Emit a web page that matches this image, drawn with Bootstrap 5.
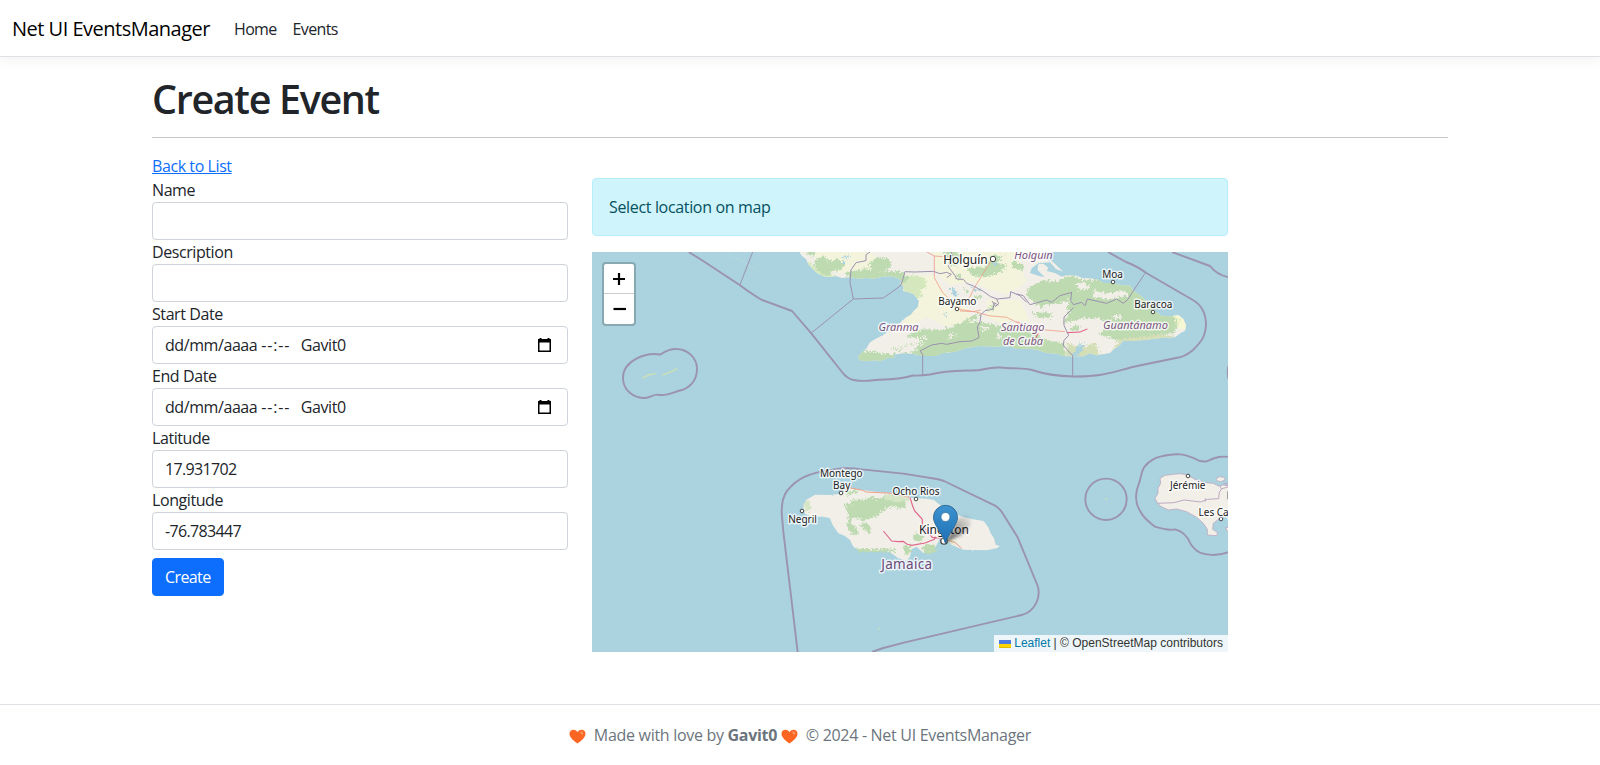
<!DOCTYPE html>
<html lang="en">
<head>
<meta charset="utf-8">
<meta name="viewport" content="width=device-width, initial-scale=1">
<title>Create Event - Net UI EventsManager</title>
<link href="https://cdn.jsdelivr.net/npm/bootstrap@5.3.0/dist/css/bootstrap.min.css" rel="stylesheet">
<style>
  html { position: relative; min-height: 100%; }
  body { margin-bottom: 60px; min-height: 705px; font-family: "Open Sans", "Noto Sans", sans-serif; letter-spacing: -.42px; overflow: hidden; }
  h1 { font-size: 39.5px; line-height: 44px; letter-spacing: -1.35px; font-weight: 600; padding-top: 4px; }
  .navbar-brand { letter-spacing: -.5px; padding: 6px 0 4px; }
  .nav-link { letter-spacing: -.65px; padding-top: 9px; padding-bottom: 7px; }
  .form-control, .btn { letter-spacing: inherit; border-radius: 4px; }
  .btn { letter-spacing: -.6px; }
  .form-control { border-color: #ced4da; }
  .coord { letter-spacing: -.65px; }
  .alert { color: #055160; border-color: #b6effb; border-radius: 4px; letter-spacing: -.34px; }
  .site-nav { box-shadow: 0 .25rem .75rem rgba(0, 0, 0, .05); }
  .site-footer { position: absolute; bottom: 0; width: 100%; height: 61px; line-height: 61px; white-space: nowrap; color: #6c757d; letter-spacing: -.3px; }
  .date-field { white-space: pre; }
  .dashes { letter-spacing: .85px; margin-left: 4px; margin-right: 10.5px; }
  .heart { width: 17px; height: 15px; }
  .map { height: 400px; background: #aad3df; overflow: hidden; }
  .map text { font-family: "Noto Sans", sans-serif; letter-spacing: 0; text-anchor: middle; paint-order: stroke; stroke: rgba(255,255,255,.75); stroke-width: 3px; stroke-linejoin: round; fill: #222; }
  .map .region { fill: #7b5580; font-style: italic; font-size: 11px; }
  .map .town { font-size: 10px; }
  .zoom-ctl { left: 10px; top: 10px; width: 34px; border: 2px solid rgba(0,0,0,.2); border-radius: 4px; background-clip: padding-box; }
  .zoom-ctl a { height: 30px; color: #000; text-decoration: none; }
  .zoom-ctl a:first-child { border-bottom: 1px solid #ccc; }
  .attrib { right: 0; bottom: 0; height: 17px; padding: 0 5px; background: rgba(255,255,255,.8); color: #333; font: 12px/16.8px "Liberation Sans", Arial, sans-serif; letter-spacing: 0; white-space: nowrap; }
  .attrib a { color: #0078a8; text-decoration: none; }
</style>
</head>
<body>
<header>
  <nav class="navbar navbar-expand-sm navbar-light bg-white border-bottom mb-3 site-nav">
    <div class="container-fluid">
      <a class="navbar-brand" href="#">Net UI EventsManager</a>
      <ul class="navbar-nav flex-grow-1">
        <li class="nav-item"><a class="nav-link text-dark" href="#">Home</a></li>
        <li class="nav-item"><a class="nav-link text-dark" href="#">Events</a></li>
      </ul>
    </div>
  </nav>
</header>
<div class="container">
  <main>
    <h1>Create Event</h1>
    <hr>
    <div class="row">
      <div class="col-4">
        <a href="#">Back to List</a>
        <form>
          <div><label class="d-block" for="name">Name</label><input id="name" class="form-control"></div>
          <div><label class="d-block" for="desc">Description</label><input id="desc" class="form-control"></div>
          <div><label class="d-block">Start Date</label>
            <div class="form-control d-flex align-items-center date-field"><span>dd/mm/aaaa</span><span class="dashes">--:--</span><span>Gavit0</span>
              <svg class="ms-auto me-1" width="13" height="14" viewBox="0 0 13 14"><path d="M1.500 0h2v1h6V0h2v1H13v13H0V1h1.500zM1.500 4.500v8h10v-8z" fill="#000" fill-rule="evenodd"/></svg></div></div>
          <div><label class="d-block">End Date</label>
            <div class="form-control d-flex align-items-center date-field"><span>dd/mm/aaaa</span><span class="dashes">--:--</span><span>Gavit0</span>
              <svg class="ms-auto me-1" width="13" height="14" viewBox="0 0 13 14"><path d="M1.500 0h2v1h6V0h2v1H13v13H0V1h1.500zM1.500 4.500v8h10v-8z" fill="#000" fill-rule="evenodd"/></svg></div></div>
          <div><label class="d-block" for="lat">Latitude</label><input id="lat" class="form-control coord" value="17.931702"></div>
          <div><label class="d-block" for="lng">Longitude</label><input id="lng" class="form-control coord" value="-76.783447"></div>
          <button type="button" class="btn btn-primary mt-2">Create</button>
        </form>
      </div>
      <div class="col-6 pt-4">
        <div class="alert alert-info">Select location on map</div>
        <div class="map position-relative">
          <svg class="d-block" width="636" height="400" viewBox="592 252 636 400">
            <defs>
              <linearGradient id="pin" x1="0" y1="0" x2="0" y2="1"><stop offset="0" stop-color="#3f93cf"/><stop offset="1" stop-color="#1d6fb4"/></linearGradient>
              <linearGradient id="shade" x1="0" y1="1" x2="1" y2="0"><stop offset="0" stop-color="#000" stop-opacity=".6"/><stop offset="1" stop-color="#000" stop-opacity="0"/></linearGradient>
              <filter id="soft"><feGaussianBlur stdDeviation="1.500"/></filter>
              <!-- ragged natural edges for vegetation and coasts -->
              <filter id="rough" x="-5%" y="-5%" width="110%" height="110%" color-interpolation-filters="sRGB"><feTurbulence type="fractalNoise" baseFrequency=".14" numOctaves="3" seed="4"/><feDisplacementMap in="SourceGraphic" scale="22" xChannelSelector="R" yChannelSelector="G"/></filter>
              <filter id="coast" x="-5%" y="-5%" width="110%" height="110%" color-interpolation-filters="sRGB"><feTurbulence type="fractalNoise" baseFrequency=".2" numOctaves="2" seed="9"/><feDisplacementMap in="SourceGraphic" scale="5" xChannelSelector="R" yChannelSelector="G"/></filter>
              <clipPath id="cubaClip"><use href="#cuba"/></clipPath>
            </defs>
            <!-- Cuba -->
            <g transform="translate(800 245) scale(.33333)">
              <g filter="url(#coast)">
              <path id="cuba" fill="#f2efe9" d="M-8 10L5 32 18 42 25 58 38 72 52 85 70 94 90 96 108 93 125 99 150 97 178 101 200 99 222 101 248 95 270 94 290 98 304 106 300 116 311 124 309 138 325 142 340 147 350 158 357 168 354 186 342 197 332 210 316 218 300 234 280 250 262 262 245 272 222 284 208 294 200 310 184 324 175 334 178 345 196 349 228 346 240 349 262 340 284 338 280 329 312 325 340 327 370 333 405 333 430 324 465 320 500 309 540 303 590 305 625 302 650 312 690 311 715 316 740 324 770 326 795 334 850 334 870 325 890 331 930 324 942 312 960 300 968 288 1000 288 1040 284 1090 278 1125 277 1142 264 1155 258 1158 240 1150 222 1135 210 1110 214 1084 212 1066 198 1052 186 1044 172 1020 150 998 136 992 122 965 121 940 114 910 114 895 104 870 100 850 100 830 92 800 90 785 95 765 84 740 78 745 68 730 56 715 58 712 74 725 88 738 98 760 100 720 94 690 84 695 70 715 55 750 52 768 72 790 80 758 50 735 40 725 10z"/>
              </g>
              <g clip-path="url(#cubaClip)">
                <path fill="#f4f4dc" d="M30 10H190L250 50 240 85 180 75 120 85 60 60zM400 10H640L680 110 620 150 560 130 520 110 450 120 410 85zM312 95L400 90 440 150 500 190 520 230 440 245 380 215 340 240 300 245 350 180 350 150zM560 165L660 165 690 230 640 225 600 235 560 215z"/>
                <g filter="url(#rough)">
                <path fill="#d5e8bd" d="M308 105l30-15 35 8 10 28-25 8 10 20-15 8-30-18-25-10zM10 45l45 25 50 20 20 25-70-5-50-20z"/>
                <path fill="#d4deb7" d="M800 290l55-15 30 20 20 45-60 8-45-15zM970 265l90 0 80 12-120 20-80 15z"/>
                <path fill="#bddab1" d="M48 42l25-8 15 15 28-8 18 16-10 18-25 2-20 18-18-14-18-18zM20 10h35l-10 22-25-2zM135 84l60-14 40 10 60-3 35 22-20 16-80-3-75 3zM205 55l30-18 30 5 12 18-15 16-40 5zM430 15l35-3 22 23-15 28-22-5zM500 68l55-3 25-38 30 8-20 18 35 8-25 20-35 12-45 2zM165 315L215 321 270 328 330 325 355 310 330 306 300 315 270 310 370 290 355 280 320 275 345 255 390 253 430 255 480 235 540 230 600 242 630 235 650 255 700 258 735 285 790 295 800 345 700 330 625 320 550 313 470 330 370 342 260 360 180 357zM678 150L690 125 730 105 770 110 810 90 850 105 910 104 1000 115 1040 155 1075 200 1150 220 1120 265 1020 275 950 285 900 270 925 240 900 220 850 220 790 235 810 200 780 180 720 185z"/>
                <path fill="#f2efe9" d="M735 178l40-2 35-12-10 25-30 15-55 5zM880 133l40 12 50-8 15 15-60 10-40-5zM800 235l60 0 25 20-5 40-35 15-45-18zM830 118l20-8 20 20-30 8zM280 308l60-10 40-3-50 18zM450 262l20 8-22 10zM360 275l15-5 5 12zM590 262l15 12-12 8zM540 245l30 5-20 9zM930 212l40 2-22 8z"/>
                <path fill="#f7f7cf" d="M1115 195h50v60l-30-3z" opacity=".8"/>
                <path fill="#bddab1" d="M465 88l12 20 8 0-8-22zM490 125l18 18-10 5zM520 150l30 5-20 8zM490 225l50-22-10 20-40 12zM640 45l35 18-10 14-30-12zM690 205l60-3 10 14-45 2zM810 245l35-5-10 16-20 2zM560 190l26-8-8 18z"/>
                <path fill="#aad3df" d="M448 130l14-2 10 24-10 2zM120 55l20-6-5 10zM575 50l20 5-10 8zM510 125l35 10-20 4zM805 330l20-8 12-26 12-2 0 14-16 24zM130 30l20 5-16 6zM430 205l10 2-4 8z"/>
                </g>
                <path fill="none" stroke="#efa08a" stroke-width="2.500" d="M380 21l23 12 0 65 25 45 18 17 25 32M403 33l50 4M470 192l52 8 20-5M475 190l35-35 15-30 50-80M480 198l45 2 40 12 55 5 40 20M650 230l55 22 90 8"/>
                <path fill="none" stroke="#e0567c" stroke-width="3" d="M800 263l40-2 22-9M695 300l20-35"/>
              </g>
              <path fill="none" stroke="#c9dfcf" stroke-width="1.500" stroke-dasharray="9 5" d="M-215 25l20 13 25 12 20 14 24 14"/>
              <g fill="none" stroke="#9c91ae" stroke-width="3">
                <path d="M-142 21l-38 98M34 264l126-102 90-3 52-37 6-17 7-25 30 1 55-2 20 7 20-4 14 6-14 10M465 92l5 10 20 1 10 12 20 8 30 16 22 16 20 7 38-4 2-18 28 12 20 20M590 162l6 14-10 8-10-16M650 147l20 5 20 27 50-14 15 7 25-20 35-10-3 25 8 12 25-7 10 10 7-20 58 13 30-13 20 13 15-13 10-17 40-60M160 162l-10-50 3-37 15-22 30-6 0-18 12-8M453 21l6 14-14 30 20 27M368 392v-64l-8-10 35-18 30-5 15 3 40-8 35-2 22-10-5-32 8-15 3-22 12-12 24-4 4-20 12 8M818 393v-61l-28-30 2-16 14-15-14-30 0-25 28-28"/>
              </g>
            </g>
            <g fill="none" stroke="#9b93af" stroke-width="1.900" stroke-linejoin="round">
              <path d="M688.700 252L704 261.500 740 285.300Q753 295 762 300L792 311 810.700 332.700 842 372Q847 379 855 380.300T875 380C890 379 898 380 913 375.500Q920 376 930 374.500C948 370 965 371 980 370Q992 367 1000 367.500C1014 369 1024 367.500 1032 370Q1050 376 1073 376.500C1105 377 1115 371 1137 366L1176 358Q1185 357 1193 350C1202 341 1205 337 1206 325Q1206 307 1192 299.500L1146.700 273.300Q1137 266 1126 262L1108 252M1172 252L1210 266Q1217 275 1228 277"/>
              <path d="M660.500 354.500C645 352 623 361 623 378C623 390 633 398 645 398C650 398 654 394 658 394.700C666 396 672 393 678 391C690 389 697 380 697 369C697 358 688 349 676 349C669 349 664 352 660.500 354.500ZM1228.500 366q-1.500 6 0 13"/>
              <circle cx="1106" cy="499.300" r="20.700"/>
            </g>
            <path stroke="#c8dfb8" stroke-width="1.700" fill="none" d="M642.500 378l6-3 7-1.500M662.500 375l8-3 7-3.500"/>
            <path fill="#c8dfb8" d="M1105 498h2v3zM878.500 628h1.500v1.500h-1.500z"/>

            <!-- Jamaica -->
            <g transform="translate(770 450) scale(.33333)">
              <g filter="url(#coast)">
              <path fill="#f2efe9" d="M100 170L108 150 135 134 180 135 212 131 240 115 275 120 340 128 400 133 420 143 470 146 492 150 510 165 540 180 570 198 605 207 640 213 655 232 662 250 672 265 677 284 690 288 680 295 650 301 580 299 545 285 535 272 510 265 500 285 485 306 460 309 440 290 425 297 420 320 410 332 385 325 365 310 350 303 270 303 250 290 240 270 225 258 205 250 188 225 180 205 160 200 130 200 105 192z"/>
              </g>
              <g filter="url(#rough)">
              <path fill="#bddab1" d="M222 160l20 3 3-15 30 2 30-10 20 8 20-10 30-8 15 22-15 14-30 10-20 20-20 8-25 8-30-12-5 20-5 0 25 22 0 14-22-6-12-18 5-30zM375 150l30 3 5 19-20 4-25-15zM400 286l24-2-3 28-15 2zM455 292l15-12 28 5-3 24-28 2zM265 225l25-7 12 12-2 22zM433 255l17-7 10 14-8 14-20-5zM260 296l60 2 55-2v9h-108zM226 124l34-5 5 10-30 6z"/>
              <path fill="#d7e5c7" d="M335 135l60-2 25 12-10 10-60-5zM100 162l14-12 8 8-2 24-14 2zM505 240l60 45-38-12z"/>
              </g>
              <path fill="none" stroke="#efa08a" stroke-width="3" d="M213 128l5-10 20-5 40 8 10 5 80 4 50 12M530 270l25 8 20 17"/>
              <path fill="none" stroke="#e0668a" stroke-width="3.500" d="M340 243l10 12 15 18 20 2 15-1 10 8 15 4 40-7 28-11 4-8M420 143l8 25 6 15 23 25 0 20 30 34 30 3"/>
              <path fill="none" stroke="#9b93af" stroke-width="5.700" stroke-linejoin="round" d="M83 606L69 488 40 245 35 188Q35 145 50 124 75 93 105 80C140 63 180 60 215 55Q250 54 275 58L400 71 500 87Q510 88 522 93L675 167Q685 173 694 184L742 260 802 405C815 440 795 485 755 495L405 577 340 594 306 606"/>
            </g>

            <!-- Haiti -->
            <g transform="translate(1040 430) scale(.33333)">
              <path fill="#f2efe9" stroke="#bda9c2" stroke-width="2.500" d="M575 170L550 165 535 168 520 160 495 158 465 148 440 134 420 131 400 133 375 136 360 145 362 160 354 175 354 190 345 205 352 218 360 228 385 240 410 237 440 245 470 262 490 280 502 298 502 315 530 317 533 308 518 298 520 280 540 265 575 243zM528 147l10-7 14 2 4 8-14 5-12-3zM575 290l-18 3 4 10 14 10"/>
              <path fill="none" stroke="#bda9c2" stroke-width="3" d="M352 220l50-2 30-8 50 6 20-8 34-2 2-20 8-10 22-6M497 205l-2 10M550 160h18M556 165h12M545 180l-5-12"/>
              <path fill="none" stroke="#555" stroke-width="3" d="M564 184v24"/>
              <path fill="none" stroke="#9b93af" stroke-width="5.700" d="M568 81C545 78 530 80 500 94Q480 96 465 86C430 70 410 71 385 75 350 80 330 88 312 112 302 130 303 145 297 160 282 195 285 220 302 246 310 262 325 275 345 290 375 300 390 301 405 298 430 303 445 325 452 342 470 368 485 373 520 375Q545 375 568 365"/>
            </g>

            <g fill="#fff" stroke="#444" stroke-width="1">
              <circle cx="993" cy="259" r="2.700"/><circle cx="957" cy="309" r="1.800"/><circle cx="1113" cy="282" r="1.800"/><circle cx="1153" cy="312" r="1.800"/>
              <circle cx="841" cy="493" r="1.800"/><circle cx="802" cy="511" r="1.800"/><circle cx="916" cy="499" r="1.800"/><circle cx="1188" cy="476" r="1.800"/><circle cx="1221" cy="519" r="1.800"/><circle cx="944" cy="541" r="3.200" stroke-width="1.300"/>
            </g>
            <text x="965.500" y="264" font-size="12">Holguín</text>
            <text class="town" x="957.300" y="305">Bayamo</text>
            <text class="town" x="1112.500" y="278">Moa</text>
            <text class="town" x="1153.300" y="308">Baracoa</text>
            <text class="region" x="1033.500" y="259">Holguín</text>
            <text class="region" x="898.500" y="331">Granma</text>
            <text class="region" x="1022.800" y="331">Santiago</text>
            <text class="region" x="1023" y="344.500">de Cuba</text>
            <text class="region" x="1135.500" y="329">Guantánamo</text>
            <text class="town" x="841.300" y="477">Montego</text>
            <text class="town" x="841.700" y="489">Bay</text>
            <text class="town" x="916" y="495">Ocho Rios</text>
            <text class="town" x="802.500" y="523">Negril</text>
            <text x="944" y="534" font-size="12">Kingston</text>
            <text x="906.800" y="569" font-size="13.500" style="fill:#6d4a78;letter-spacing:.3px">Jamaica</text>
            <text class="town" x="1187.700" y="489">Jérémie</text>
            <text class="town" x="1198.500" y="515.500" style="text-anchor:start">Les Cayes</text>

            <!-- marker -->
            <path d="M946 542L957 520Q968 511 971 519 972 529 960 536z" fill="url(#shade)" filter="url(#soft)"/>
            <path d="M945.500 543.500C943 534 933.500 525 933.500 517.300A12 12 0 0 1 957.500 517.300C957.500 525 948 534 945.500 543.500z" fill="url(#pin)" stroke="#2e6c97" stroke-width="1"/>
            <circle cx="945.500" cy="517" r="4.500" fill="#fff" stroke="#2b6a9c" stroke-width=".7"/>
          </svg>
          <div class="zoom-ctl position-absolute bg-white">
            <a href="#" class="d-flex align-items-center justify-content-center"><svg width="12" height="12"><path d="M0 6h12M6 0v12" stroke="#000" stroke-width="2.200"/></svg></a>
            <a href="#" class="d-flex align-items-center justify-content-center"><svg width="13" height="12"><path d="M.5 6h12.500" stroke="#000" stroke-width="2.200"/></svg></a>
          </div>
          <div class="attrib position-absolute"><a href="#"><svg width="12" height="8" viewBox="0 0 12 8"><path fill="#4c7be1" d="M0 0h12v4H0z"/><path fill="#ffd500" d="M0 4h12v3H0z"/><path fill="#e0bc00" d="M0 7h12v1H0z"/></svg> Leaflet</a> | © OpenStreetMap contributors</div>
        </div>
      </div>
    </div>
  </main>
</div>
<footer class="site-footer border-top text-center">
  <svg class="heart" viewBox="0 0 17 15"><path id="hrt" d="M8.500 14.500C5 12 .5 8.500 .5 4.700 .5 2.300 2.300.7 4.500.7 6.300.7 7.800 1.700 8.500 3.200 9.200 1.700 10.700.7 12.500.7c2.200 0 4 1.600 4 4C16.500 8.500 12 12 8.500 14.500z" fill="#fc6522"/><ellipse cx="12.800" cy="4" rx="2" ry="1.300" fill="#ff9259" transform="rotate(50 12.800 4)"/></svg>
  <span class="ms-1">Made with love by</span> <b>Gavit0</b>
  <svg class="heart" viewBox="0 0 17 15"><use href="#hrt"/><ellipse cx="12.800" cy="4" rx="2" ry="1.300" fill="#ff9259" transform="rotate(50 12.800 4)"/></svg>
  <span class="ms-1">© 2024 - Net UI EventsManager</span>
</footer>
<script src="https://cdn.jsdelivr.net/npm/bootstrap@5.3.0/dist/js/bootstrap.bundle.min.js"></script>
</body>
</html>
